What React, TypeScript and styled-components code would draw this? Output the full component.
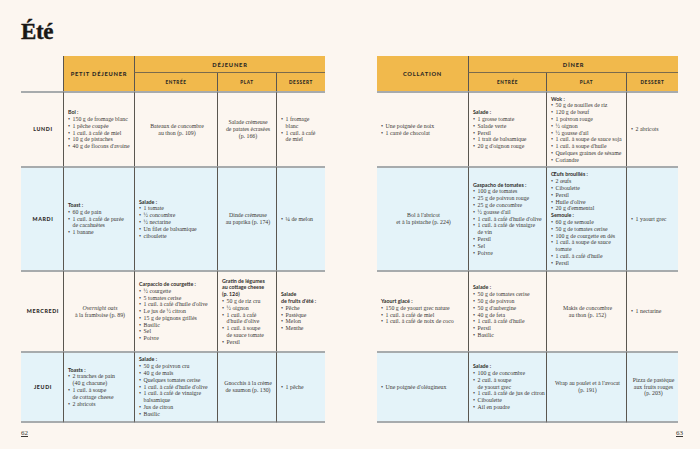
import React from "react";
import styled, { createGlobalStyle } from "styled-components";

type Group = { label?: string; items: string[] };
type CellData = { center?: string; em?: string; groups?: Group[] };
type Row = { day?: string; cells: CellData[] };

const Global = createGlobalStyle`
  html, body { margin: 0; padding: 0; background: #fcf6f0; }
  * { box-sizing: border-box; }
`;

const leftRows: Row[] = [
  {
    day: "LUNDI",
    cells: [
      { groups: [{ label: "Bol :", items: ["150 g de fromage blanc", "1 pêche coupée", "1 cuil. à café de miel", "10 g de pistaches", "40 g de flocons d'avoine"] }] },
      { center: "Bateaux de concombre\nau thon (p. 109)" },
      { center: "Salade crémeuse\nde patates écrasées\n(p. 166)" },
      { groups: [{ items: ["1 fromage\nblanc", "1 cuil. à café\nde miel"] }] },
    ],
  },
  {
    day: "MARDI",
    cells: [
      { groups: [{ label: "Toast :", items: ["60 g de pain", "1 cuil. à café de purée\nde cacahuètes", "1 banane"] }] },
      { groups: [{ label: "Salade :", items: ["1 tomate", "½ concombre", "½ nectarine", "Un filet de balsamique", "ciboulette"] }] },
      { center: "Dinde crémeuse\nau paprika (p. 174)" },
      { groups: [{ items: ["¼ de melon"] }] },
    ],
  },
  {
    day: "MERCREDI",
    cells: [
      { em: "Overnight oats", center: "à la framboise (p. 89)" },
      { groups: [{ label: "Carpaccio de courgette :", items: ["½ courgette", "5 tomates cerise", "1 cuil. à café d'huile d'olive", "Le jus de ½ citron", "15 g de pignons grillés", "Basilic", "Sel", "Poivre"] }] },
      { groups: [{ label: "Gratin de légumes\nau cottage cheese\n(p. 126)", items: ["50 g de riz cru", "½ oignon", "1 cuil. à café\nd'huile d'olive", "1 cuil. à soupe\nde sauce tomate", "Persil"] }] },
      { groups: [{ label: "Salade\nde fruits d'été :", items: ["Pêche", "Pastèque", "Melon", "Menthe"] }] },
    ],
  },
  {
    day: "JEUDI",
    cells: [
      { groups: [{ label: "Toasts :", items: ["2 tranches de pain\n(40 g chacune)", "1 cuil. à soupe\nde cottage cheese", "2 abricots"] }] },
      { groups: [{ label: "Salade :", items: ["50 g de poivron cru", "40 g de maïs", "Quelques tomates cerise", "1 cuil. à café d'huile d'olive", "1 cuil. à café de vinaigre\nbalsamique", "Jus de citron", "Basilic"] }] },
      { center: "Gnocchis à la crème\nde saumon (p. 130)" },
      { groups: [{ items: ["1 pêche"] }] },
    ],
  },
];

const rightRows: Row[] = [
  {
    cells: [
      { groups: [{ items: ["Une poignée de noix", "1 carré de chocolat"] }] },
      { groups: [{ label: "Salade :", items: ["1 grosse tomate", "Salade verte", "Persil", "1 trait de balsamique", "20 g d'oignon rouge"] }] },
      { groups: [{ label: "Wok :", items: ["50 g de nouilles de riz", "120 g de bœuf", "1 poivron rouge", "½ oignon", "½ gousse d'ail", "1 cuil. à soupe de sauce soja", "1 cuil. à soupe d'huile", "Quelques graines de sésame", "Coriandre"] }] },
      { groups: [{ items: ["2 abricots"] }] },
    ],
  },
  {
    cells: [
      { center: "Bol à l'abricot\net à la pistache (p. 224)" },
      { groups: [{ label: "Gaspacho de tomates :", items: ["100 g de tomates", "25 g de poivron rouge", "25 g de concombre", "½ gousse d'ail", "1 cuil. à café d'huile d'olive", "1 cuil. à café de vinaigre\nde vin", "Persil", "Sel", "Poivre"] }] },
      {
        groups: [
          { label: "Œufs brouillés :", items: ["2 œufs", "Ciboulette", "Persil", "Huile d'olive", "20 g d'emmental"] },
          { label: "Semoule :", items: ["60 g de semoule", "50 g de tomates cerise", "100 g de courgette en dés", "1 cuil. à soupe de sauce\ntomate", "1 cuil. à café d'huile", "Persil"] },
        ],
      },
      { groups: [{ items: ["1 yaourt grec"] }] },
    ],
  },
  {
    cells: [
      { groups: [{ label: "Yaourt glacé :", items: ["150 g de yaourt grec nature", "1 cuil. à café de miel", "1 cuil. à café de noix de coco"] }] },
      { groups: [{ label: "Salade :", items: ["50 g de tomates cerise", "50 g de poivron", "50 g d'aubergine", "40 g de feta", "1 cuil. à café d'huile", "Persil", "Basilic"] }] },
      { center: "Makis de concombre\nau thon (p. 152)" },
      { groups: [{ items: ["1 nectarine"] }] },
    ],
  },
  {
    cells: [
      { groups: [{ items: ["Une poignée d'oléagineux"] }] },
      { groups: [{ label: "Salade :", items: ["100 g de concombre", "2 cuil. à soupe\nde yaourt grec", "1 cuil. à café de jus de citron", "Ciboulette", "Ail en poudre"] }] },
      { center: "Wrap au poulet et à l'avocat\n(p. 191)" },
      { center: "Pizza de pastèque\naux fruits rouges\n(p. 203)" },
    ],
  },
];

const CellBody = ({ data }: { data: CellData }) => (
  <>
    {data.em && <Em>{data.em}</Em>}
    {data.center && <span>{data.center}</span>}
    {data.groups?.map((g, i) => (
      <React.Fragment key={i}>
        {g.label && <Label>{g.label}</Label>}
        <List>
          {g.items.map((it) => (
            <Item key={it}>
              <span>{it}</span>
            </Item>
          ))}
        </List>
      </React.Fragment>
    ))}
  </>
);

const App = () => {
  return (
    <>
      <Global />
      <Spread>
        <Half $pad="21px 0 0 21px">
          <Title>Été</Title>
          <Table $cols="42px 71px 83px 59px 49px">
            <Corner />
            <Head $area="1 / 2 / 3 / 3" $line>PETIT DÉJEUNER</Head>
            <Head $area="1 / 3 / 2 / 6" $line $rule>DÉJEUNER</Head>
            <Head $line $small>ENTRÉE</Head>
            <Head $line $small>PLAT</Head>
            <Head $line $small>DESSERT</Head>
            {leftRows.map((row, r) => (
              <React.Fragment key={row.day}>
                <Day $blue={r % 2 === 1} $last={r === leftRows.length - 1}>
                  {row.day}
                </Day>
                {row.cells.map((c, i) => (
                  <Cell key={i} $blue={r % 2 === 1} $last={r === leftRows.length - 1} $line $center={!!c.center}>
                    <CellBody data={c} />
                  </Cell>
                ))}
              </React.Fragment>
            ))}
          </Table>
          <PageNo>62</PageNo>
        </Half>
        <Half $pad="56px 0 0 27px">
          <Table $cols="91px 78px 80px 52px">
            <Head $area="1 / 1 / 3 / 2">COLLATION</Head>
            <Head $area="1 / 2 / 2 / 5" $line $rule>DÎNER</Head>
            <Head $line $small>ENTRÉE</Head>
            <Head $line $small>PLAT</Head>
            <Head $line $small>DESSERT</Head>
            {rightRows.map((row, r) => (
              <React.Fragment key={r}>
                {row.cells.map((c, i) => (
                  <Cell key={i} $blue={r % 2 === 1} $last={r === rightRows.length - 1} $line={i > 0} $center={!!c.center}>
                    <CellBody data={c} />
                  </Cell>
                ))}
              </React.Fragment>
            ))}
          </Table>
          <PageNo $right>63</PageNo>
        </Half>
      </Spread>
    </>
  );
};

export default App;

const Spread = styled.div`
  display: flex;
  width: 700px;
  height: 449px;
  background: #fcf6f0;
  overflow: hidden;
`;

const Half = styled.div<{ $pad: string }>`
  width: 350px;
  display: flex;
  flex-direction: column;
  padding: ${(p) => p.$pad};
`;

const Title = styled.h1`
  margin: 0 0 13px;
  height: 22px;
  font-family: "Liberation Serif", "DejaVu Serif", serif;
  font-weight: 700;
  font-size: 23px;
  line-height: 22px;
  color: #1a1816;
  letter-spacing: -0.4px;
  -webkit-text-stroke: 0.4px #1a1816;
`;

const Table = styled.div<{ $cols: string }>`
  display: grid;
  grid-template-columns: ${(p) => p.$cols};
  grid-template-rows: 17px 18px 75px 104px 81px 72px;
  width: max-content;
`;

const Corner = styled.div`
  grid-area: 1 / 1 / 3 / 2;
`;

const Head = styled.div<{ $area?: string; $line?: boolean; $rule?: boolean; $small?: boolean }>`
  grid-area: ${(p) => p.$area ?? "auto"};
  background: #f1b94c;
  display: flex;
  align-items: center;
  justify-content: center;
  font-family: Lato, "DejaVu Sans", sans-serif;
  font-weight: 900;
  font-size: ${(p) => (p.$small ? "4.6px" : "5.7px")};
  letter-spacing: ${(p) => (p.$small ? "0.65px" : "0.8px")};
  color: #2b2824;
  border-left: ${(p) => (p.$line ? "1px solid #5a5650" : "none")};
  border-bottom: ${(p) => (p.$rule ? "1px solid #7a6b4d" : "none")};
`;

const Cell = styled.div<{ $blue: boolean; $last: boolean; $line?: boolean; $center?: boolean }>`
  background: ${(p) => (p.$blue ? "#e4f3f9" : "transparent")};
  border-top: 2px solid #a7abad;
  border-bottom: ${(p) => (p.$last ? "2px solid #a7abad" : "none")};
  border-left: ${(p) => (p.$line ? "1px solid #5a5650" : "none")};
  display: flex;
  flex-direction: column;
  justify-content: center;
  align-items: ${(p) => (p.$center ? "center" : "flex-start")};
  text-align: ${(p) => (p.$center ? "center" : "left")};
  padding: 0 2px 0 4px;
  font-family: "Liberation Serif", "DejaVu Serif", serif;
  font-size: 5.85px;
  line-height: 6.8px;
  color: #3a3734;
  white-space: pre;
`;

const Day = styled(Cell)`
  align-items: center;
  font-family: Lato, "DejaVu Sans", sans-serif;
  font-weight: 900;
  font-size: 5.3px;
  letter-spacing: 0.65px;
  color: #2b2824;
`;

const Em = styled.span`
  font-style: italic;
`;

const Label = styled.div`
  font-family: Lato, "DejaVu Sans", sans-serif;
  font-weight: 700;
  font-size: 5.3px;
  color: #2f2c29;
`;

const List = styled.ul`
  margin: 0;
  padding: 0;
  list-style: none;
`;

const Item = styled.li`
  display: flex;

  &::before {
    content: "•";
    width: 4.6px;
    flex-shrink: 0;
  }
`;

const PageNo = styled.span<{ $right?: boolean }>`
  align-self: flex-start;
  margin: 6px 0 0 ${(p) => (p.$right ? "299px" : "0")};
  font-family: "Liberation Serif", "DejaVu Serif", serif;
  font-size: 7px;
  line-height: 8px;
  color: #3a3734;
  text-decoration: underline;
  text-underline-offset: 1px;
`;
